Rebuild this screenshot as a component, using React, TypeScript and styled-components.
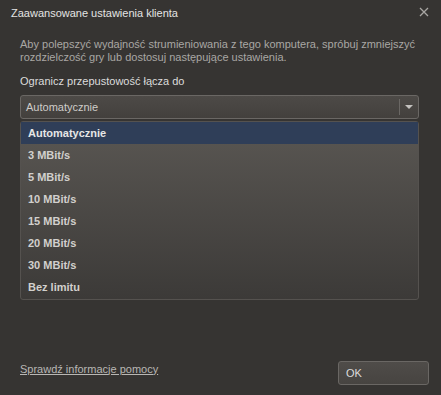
import React from "react"
import styled, { createGlobalStyle } from "styled-components"

const Global = createGlobalStyle`
  html, body {
    margin: 0;
    padding: 0;
    background: #363432;
  }
  body {
    font-family: "Liberation Sans", Arial, sans-serif;
    font-size: 11px;
  }
`

const Dialog = styled.div`
  width: 441px;
  height: 395px;
  box-sizing: border-box;
  display: flex;
  flex-direction: column;
  background: #363432;
`

const TitleBar = styled.div`
  height: 26px;
  display: flex;
  align-items: center;
  justify-content: space-between;
  padding: 0 12px 0 11px;
  color: #e4e4e4;
  font-size: 11px;
`

const Close = styled.svg`
  width: 10px;
  height: 10px;
  margin-top: -2px;
`

const Body = styled.div`
  padding: 12px 22px 0 20px;
  display: flex;
  flex-direction: column;
`

const Intro = styled.p`
  margin: 0;
  color: #a9a7a4;
  line-height: 12.5px;
`

const Label = styled.div`
  margin-top: 12px;
  color: #dcdcdc;
  line-height: 13px;
`

const Select = styled.div`
  margin-top: 7px;
  height: 24px;
  box-sizing: border-box;
  border: 1px solid #6a6764;
  border-radius: 3px;
  background: linear-gradient(#4d4a47, #43403d);
  display: flex;
  align-items: center;
  color: #cfcdca;
  padding-left: 5px;
`

const SelectValue = styled.span`
  flex: 1;
`

const Caret = styled.div`
  width: 18px;
  height: 16px;
  border-left: 1px solid #6a6764;
  display: flex;
  align-items: center;
  justify-content: center;
  &::after {
    content: "";
    border-left: 4px solid transparent;
    border-right: 4px solid transparent;
    border-top: 4px solid #c4c2bf;
  }
`

const Menu = styled.div`
  margin-top: 2px;
  border: 1px solid #55524f;
  border-radius: 3px;
  background: linear-gradient(#5a5753, #3c3a38);
  padding-bottom: 1px;
`

const Item = styled.div<{ $active?: boolean }>`
  height: 22px;
  display: flex;
  align-items: center;
  padding-left: 7px;
  font-weight: bold;
  color: ${p => (p.$active ? "#e6e6e6" : "#d2d0cd")};
  background: ${p => (p.$active ? "#2f3e58" : "transparent")};
`

const Footer = styled.div`
  margin-top: auto;
  display: flex;
  align-items: center;
  justify-content: space-between;
  padding: 0 12px 10px 20px;
`

const HelpLink = styled.a`
  color: #b9b7b4;
  text-decoration: underline;
  margin-top: -9px;
  cursor: pointer;
`

const OkButton = styled.button`
  width: 91px;
  height: 24px;
  box-sizing: border-box;
  border: 1px solid #6a6764;
  border-radius: 3px;
  background: linear-gradient(#4f4c49, #474441);
  color: #dcdcdc;
  font-family: inherit;
  font-size: 11px;
  text-align: left;
  padding-left: 7px;
`

const options = [
  "Automatycznie",
  "3 MBit/s",
  "5 MBit/s",
  "10 MBit/s",
  "15 MBit/s",
  "20 MBit/s",
  "30 MBit/s",
  "Bez limitu",
]

export default function App() {
  return (
    <>
      <Global />
      <Dialog>
        <TitleBar>
          <span>Zaawansowane ustawienia klienta</span>
          <Close viewBox="0 0 10 10">
            <path d="M1 1 L9 9 M9 1 L1 9" stroke="#a8a6a3" strokeWidth="1.3" />
          </Close>
        </TitleBar>
        <Body>
          <Intro>
            Aby polepszyć wydajność strumieniowania z tego komputera, spróbuj zmniejszyć
            rozdzielczość gry lub dostosuj następujące ustawienia.
          </Intro>
          <Label>Ogranicz przepustowość łącza do</Label>
          <Select>
            <SelectValue>Automatycznie</SelectValue>
            <Caret />
          </Select>
          <Menu>
            {options.map((o, i) => (
              <Item key={o} $active={i === 0}>{o}</Item>
            ))}
          </Menu>
        </Body>
        <Footer>
          <HelpLink>Sprawdź informacje pomocy</HelpLink>
          <OkButton>OK</OkButton>
        </Footer>
      </Dialog>
    </>
  )
}
